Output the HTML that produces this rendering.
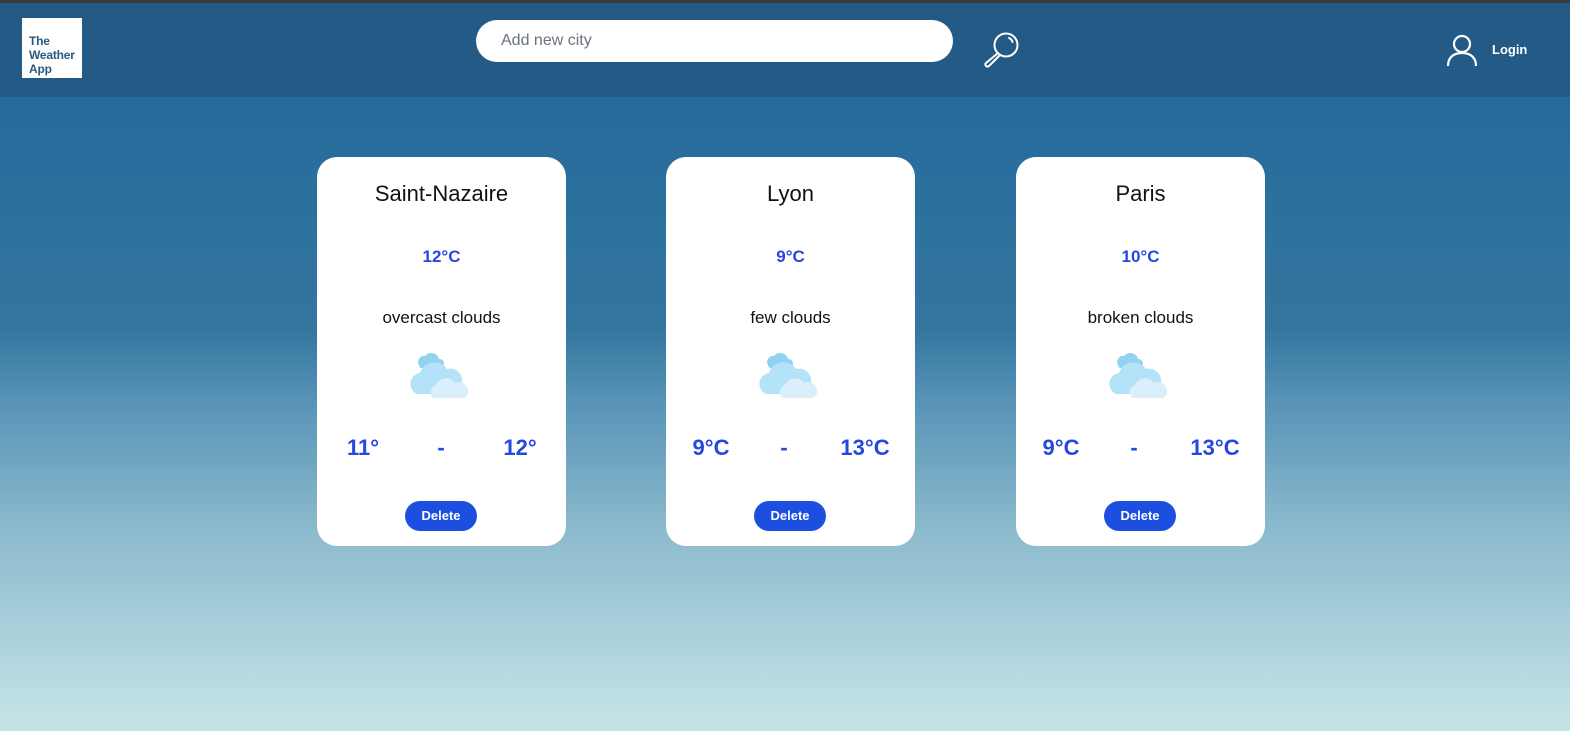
<!DOCTYPE html>
<html><head><meta charset="utf-8"><style>
*{margin:0;padding:0;box-sizing:border-box}
body{width:1570px;height:731px;overflow:hidden;font-family:"Liberation Sans",sans-serif;background:linear-gradient(to bottom,#266a9c 0px,#266a9c 100px,#33779f 330px,#5793b7 400px,#8cbacd 530px,#c3e3e7 720px,#c3e3e7 731px);position:relative}
.top{position:absolute;left:0;top:0;width:1570px;height:3px;background:#3b3b3b}
.hdr{position:absolute;left:0;top:3px;width:1570px;height:94px;background:#235a86}
.logo{position:absolute;left:22px;top:18px;width:60px;height:60px;background:#fff;color:#235a86;font-weight:bold;font-size:12px;line-height:14px;padding:16px 0 0 7px;letter-spacing:-0.2px}
.search{position:absolute;left:476px;top:20px;width:477px;height:42px;background:#fff;border-radius:21px;color:#6b7280;font-size:16px;line-height:42px;padding-left:25px}
.login{position:absolute;left:1492px;top:42px;color:#fff;font-weight:bold;font-size:13px}
.card{position:absolute;top:157px;width:249px;height:389px;background:#fff;border-radius:20px;text-align:center}
.name{position:absolute;top:24px;width:100%;font-size:22px;color:#111}
.t{position:absolute;top:90px;width:100%;font-size:17px;font-weight:bold;color:#2448e0}
.d{position:absolute;top:151px;width:100%;font-size:17px;color:#111}
.ic{position:absolute;top:192px;left:92px}
.v{position:absolute;top:278px;font-size:22px;font-weight:bold;color:#2448e0;width:100px;margin-left:-50px}
.btn{position:absolute;left:88px;top:344px;width:72px;height:30px;border-radius:15px;background:#1c4fe0;color:#fff;font-weight:bold;font-size:13px;line-height:30px}
</style></head><body>
<div class="top"></div>
<div class="hdr"></div>
<div class="logo">The<br>Weather<br>App</div>
<div class="search">Add new city</div>
<svg style="position:absolute;left:980px;top:28px" width="44" height="44" viewBox="0 0 44 44" fill="none" stroke="#fff" stroke-width="2" stroke-linecap="round" stroke-linejoin="round"><circle cx="26" cy="17" r="11.5"/><path d="M29 10a6 6 0 0 1 3.5 4"/><path d="M18 25 L6 35 a2 2 0 0 0 3 3 L19.5 27.5"/></svg>
<svg style="position:absolute;left:1446px;top:33px" width="32" height="34" viewBox="0 0 32 34" fill="none" stroke="#fff" stroke-width="2.2"><circle cx="16" cy="11" r="8"/><path d="M2 33 C2 24 8 20 16 20 C24 20 30 24 30 33"/></svg>
<div class="login">Login</div>

<div class="card" style="left:317px"><div class="name">Saint-Nazaire</div><div class="t">12°C</div><div class="d">overcast clouds</div>
<svg class="ic" width="64" height="54" viewBox="0 0 64 54"><path d="M10 16a6 6 0 0 1 6-9a8 8 0 0 1 14 3a4 4 0 0 1 1 9H12a4 4 0 0 1-2-3z" fill="#8fd3f0"/><path d="M8 45a11 11 0 0 1 3-21a15 15 0 0 1 27-4a12 12 0 0 1 15 13a8 8 0 0 1-2 12z" fill="#b4e2f8"/><path d="M24 49a8 8 0 0 1 3-13a11 11 0 0 1 19-2a9 9 0 0 1 13 7a7 7 0 0 1-4 8H26z" fill="#dbeffb"/></svg>
<div class="v" style="left:46px">11°</div><div class="v" style="left:124px">-</div><div class="v" style="left:203px">12°</div>
<div class="btn">Delete</div></div>

<div class="card" style="left:666px"><div class="name">Lyon</div><div class="t">9°C</div><div class="d">few clouds</div>
<svg class="ic" width="64" height="54" viewBox="0 0 64 54"><path d="M10 16a6 6 0 0 1 6-9a8 8 0 0 1 14 3a4 4 0 0 1 1 9H12a4 4 0 0 1-2-3z" fill="#8fd3f0"/><path d="M8 45a11 11 0 0 1 3-21a15 15 0 0 1 27-4a12 12 0 0 1 15 13a8 8 0 0 1-2 12z" fill="#b4e2f8"/><path d="M24 49a8 8 0 0 1 3-13a11 11 0 0 1 19-2a9 9 0 0 1 13 7a7 7 0 0 1-4 8H26z" fill="#dbeffb"/></svg>
<div class="v" style="left:45px">9°C</div><div class="v" style="left:118px">-</div><div class="v" style="left:199px">13°C</div>
<div class="btn">Delete</div></div>

<div class="card" style="left:1016px"><div class="name">Paris</div><div class="t">10°C</div><div class="d">broken clouds</div>
<svg class="ic" width="64" height="54" viewBox="0 0 64 54"><path d="M10 16a6 6 0 0 1 6-9a8 8 0 0 1 14 3a4 4 0 0 1 1 9H12a4 4 0 0 1-2-3z" fill="#8fd3f0"/><path d="M8 45a11 11 0 0 1 3-21a15 15 0 0 1 27-4a12 12 0 0 1 15 13a8 8 0 0 1-2 12z" fill="#b4e2f8"/><path d="M24 49a8 8 0 0 1 3-13a11 11 0 0 1 19-2a9 9 0 0 1 13 7a7 7 0 0 1-4 8H26z" fill="#dbeffb"/></svg>
<div class="v" style="left:45px">9°C</div><div class="v" style="left:118px">-</div><div class="v" style="left:199px">13°C</div>
<div class="btn">Delete</div></div>
</body></html>
